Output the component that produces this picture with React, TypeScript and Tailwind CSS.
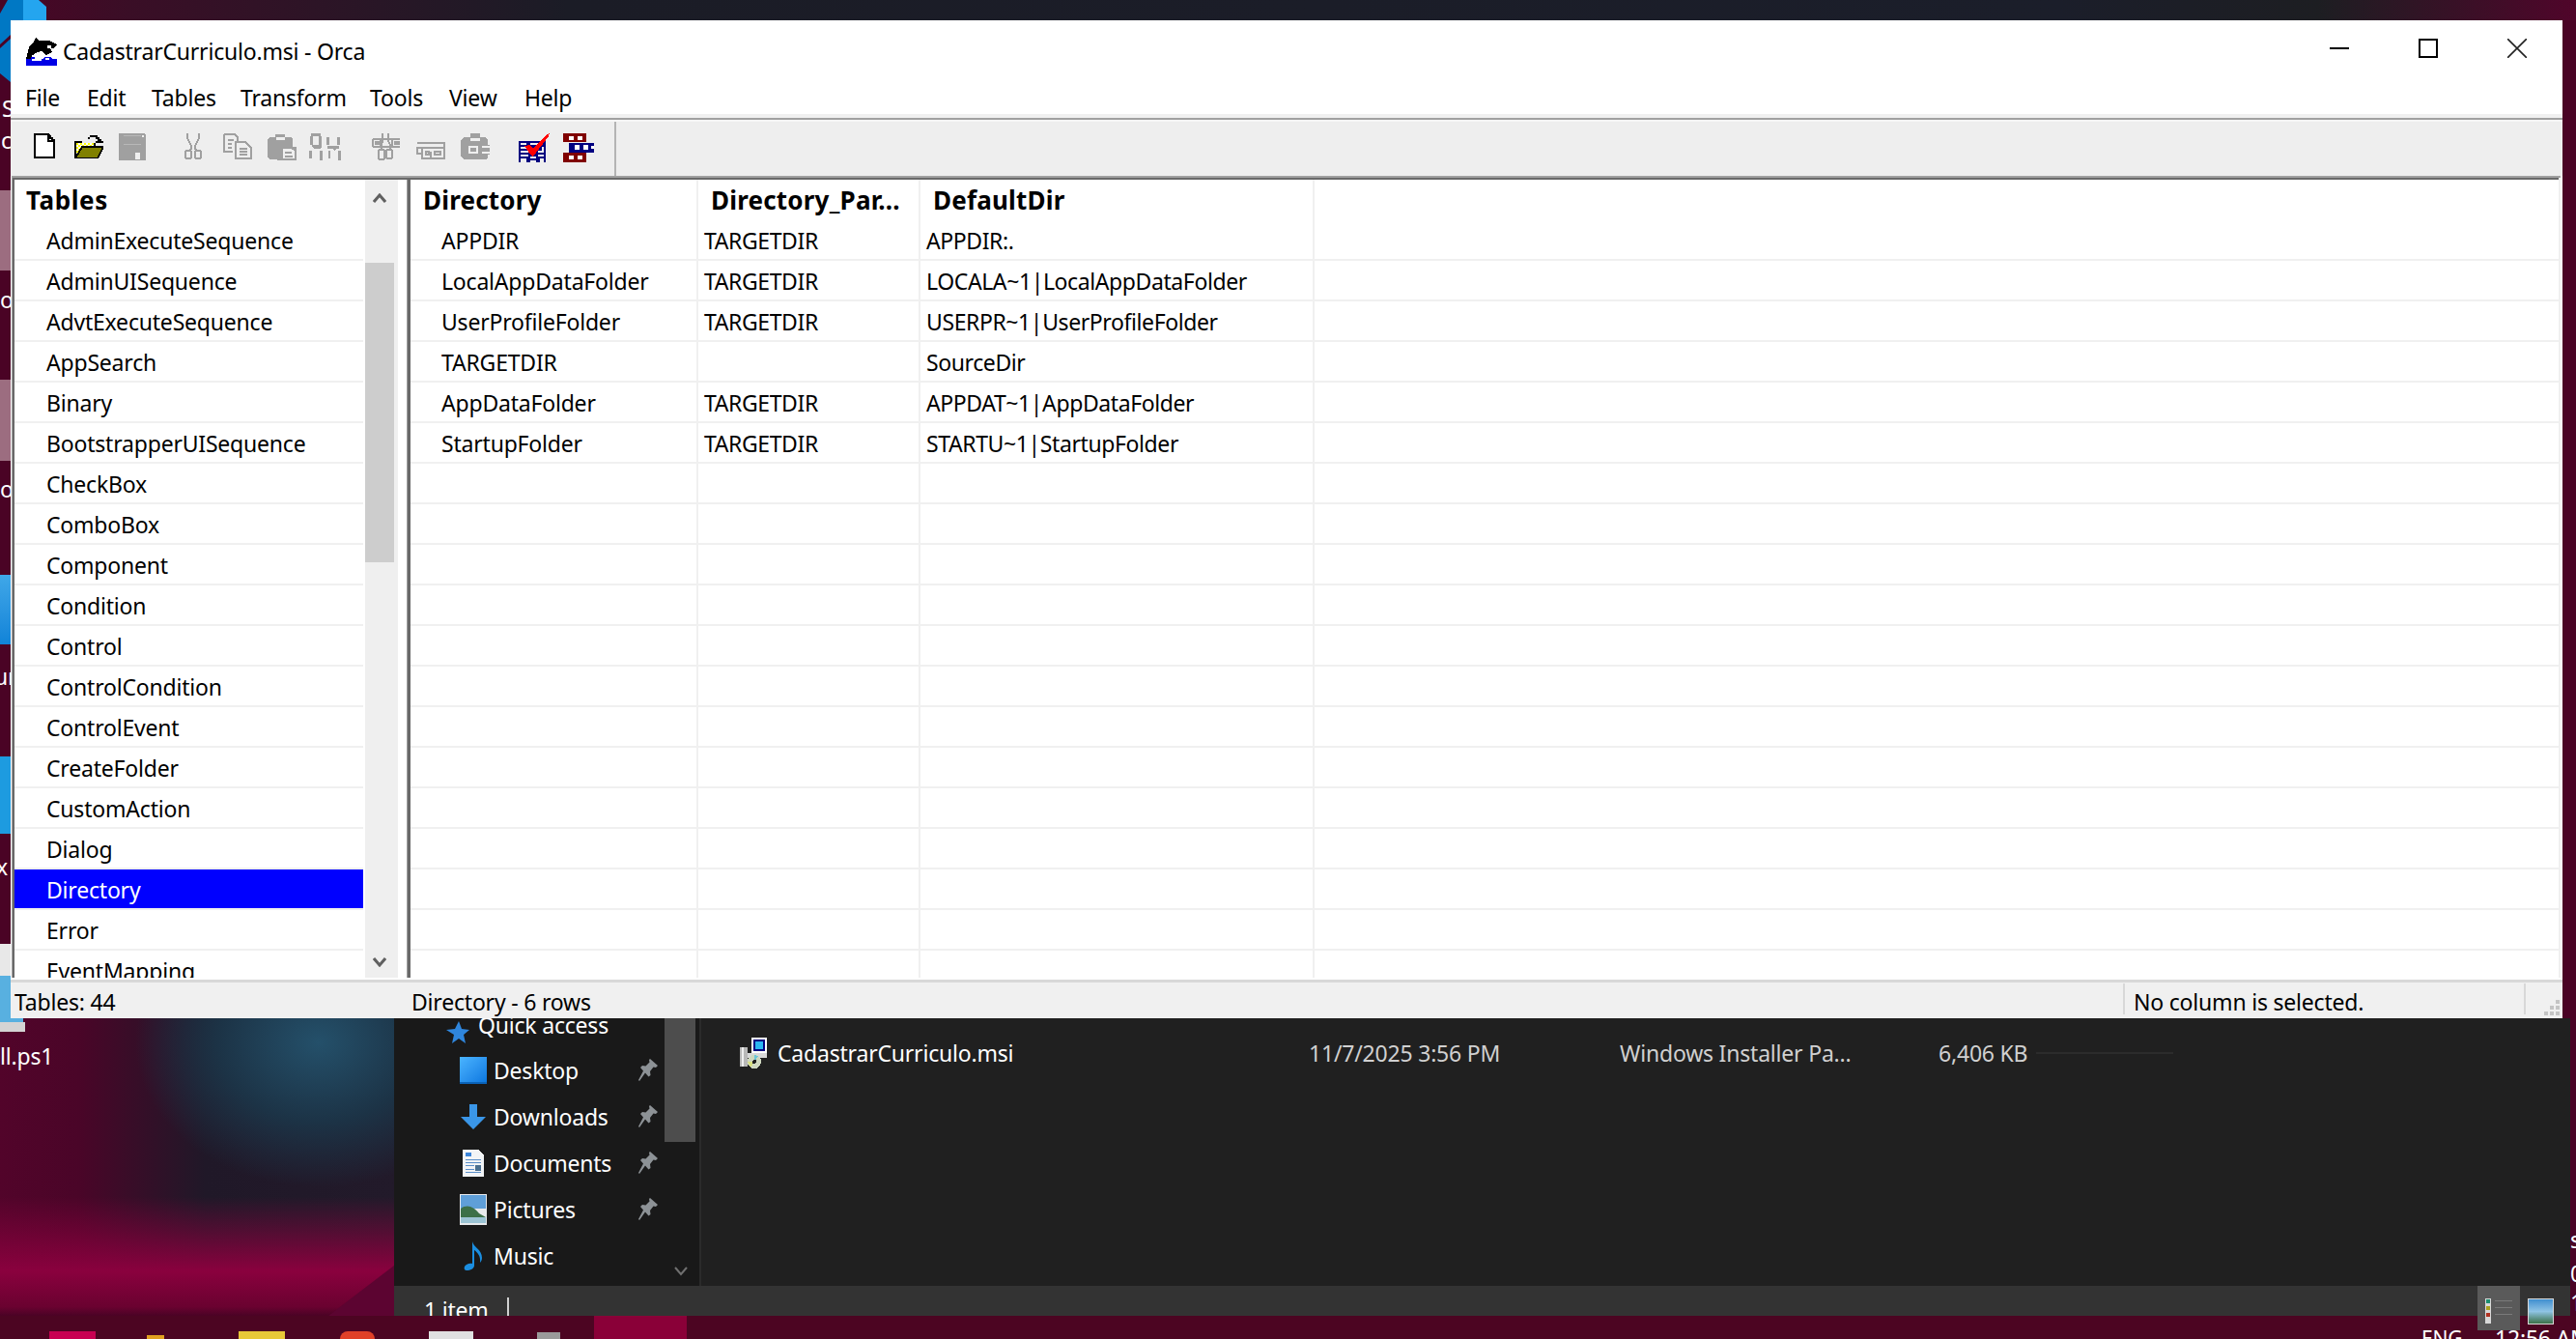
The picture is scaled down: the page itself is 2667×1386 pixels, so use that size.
import React from 'react';

const FONT = "font-['Noto_Sans',sans-serif] text-[23px] tracking-[-0.2px]";

const tables = [
  'AdminExecuteSequence', 'AdminUISequence', 'AdvtExecuteSequence', 'AppSearch', 'Binary',
  'BootstrapperUISequence', 'CheckBox', 'ComboBox', 'Component', 'Condition', 'Control',
  'ControlCondition', 'ControlEvent', 'CreateFolder', 'CustomAction', 'Dialog', 'Directory',
  'Error', 'EventMapping',
];

const dirRows = [
  ['APPDIR', 'TARGETDIR', 'APPDIR:.'],
  ['LocalAppDataFolder', 'TARGETDIR', 'LOCALA~1|LocalAppDataFolder'],
  ['UserProfileFolder', 'TARGETDIR', 'USERPR~1|UserProfileFolder'],
  ['TARGETDIR', '', 'SourceDir'],
  ['AppDataFolder', 'TARGETDIR', 'APPDAT~1|AppDataFolder'],
  ['StartupFolder', 'TARGETDIR', 'STARTU~1|StartupFolder'],
  ...Array.from({ length: 13 }, () => ['', '', '']),
];

const menus = [
  ['File', 'w-[64px]'], ['Edit', 'w-[67px]'], ['Tables', 'w-[92px]'], ['Transform', 'w-[134px]'],
  ['Tools', 'w-[82px]'], ['View', 'w-[78px]'], ['Help', 'w-[60px]'],
];

function OrcaIcon() {
  return (
    <svg width="32" height="29" viewBox="0 0 32 29" shapeRendering="crispEdges">
      <path d="M0 22 L3 10 L8 4 L10 0 L13 3 L24 3 L32 7 L29 11 L25 11 L27 15 L21 18 L16 14 L9 16 L6 22 Z" fill="#000" />
      <path d="M22 8h4v3h-4zM6 18h8v4H6z" fill="#fff" />
      <path d="M0 22h5v-2h4v2h8l3-2h5l3 2h4v7H0z" fill="#0000e6" />
      <path d="M6 22h10v2H6zM20 21h4v2h-4z" fill="#fff" />
    </svg>
  );
}

function NewIcon() {
  return (
    <svg width="22" height="26" viewBox="0 0 22 26" shapeRendering="crispEdges">
      <path d="M1 1h14l2 2v2h2v2h2v18H1z" fill="#fff" stroke="#000" strokeWidth="2" />
      <path d="M14 1h2v6h5v2h-7z" fill="#000" />
    </svg>
  );
}

function OpenIcon() {
  return (
    <svg width="30" height="26" viewBox="0 0 30 26" shapeRendering="crispEdges">
      <defs>
        <pattern id="dither" width="4" height="4" patternUnits="userSpaceOnUse">
          <rect width="4" height="4" fill="#fff" />
          <rect width="2" height="2" fill="#ffff00" />
          <rect x="2" y="2" width="2" height="2" fill="#ffff00" />
        </pattern>
      </defs>
      <path d="M0 8h8v2h14v6H0z" fill="#000" />
      <path d="M2 10h18v10H2z" fill="url(#dither)" />
      <path d="M0 10h2v16H0zM0 24h24v2H0z" fill="#000" />
      <path d="M2 24l6-10h22l-6 12H2z" fill="#808000" stroke="#000" strokeWidth="2" />
      <path d="M14 4h2V2h8v2h2v2h2v2h2v2h-8V8h2V6h-2V4h-6v2h-2z" fill="#000" />
    </svg>
  );
}

function SaveIcon() {
  return (
    <svg width="28" height="28" viewBox="0 0 28 28" shapeRendering="crispEdges">
      <path d="M0 0h26l2 2v26H0z" fill="#a0a0a0" />
      <path d="M5 2h18v1H5zM5 11h18v1H5z" fill="#b8b8b8" />
      <path d="M17 20h5v7h-5z" fill="#efefef" />
      <path d="M24 2h2v2h-2z" fill="#efefef" />
    </svg>
  );
}

function CutIcon() {
  return (
    <svg width="18" height="27" viewBox="0 0 18 27" fill="none" stroke="#a0a0a0" strokeWidth="2" shapeRendering="crispEdges">
      <path d="M3 0v5l2 4 2 4v3l-2 2M15 0v5l-2 4-2 4v3l2 2" />
      <rect x="1" y="18" width="6" height="8" rx="2" />
      <rect x="11" y="18" width="6" height="8" rx="2" />
    </svg>
  );
}

function CopyIcon() {
  return (
    <svg width="30" height="27" viewBox="0 0 30 27" fill="none" stroke="#a0a0a0" strokeWidth="2" shapeRendering="crispEdges">
      <path d="M1 1h11l3 3v6M1 1v18h9" />
      <path d="M5 7h6M5 11h4M5 15h4" />
      <path d="M13 9h10l6 6v11H13z" fill="#efefef" />
      <path d="M17 16h8M17 19h8M17 22h8" />
    </svg>
  );
}

function PasteIcon() {
  return (
    <svg width="30" height="28" viewBox="0 0 30 28" shapeRendering="crispEdges">
      <path d="M2 4h6V1h10v3h6l2 2v8h4v14H10v-1H2l-2-2V6z" fill="#a0a0a0" />
      <path d="M9 4h9v3H9z" fill="#efefef" />
      <path d="M15 15h10l4 3v9H15z" fill="#efefef" stroke="#a0a0a0" strokeWidth="2" />
      <path d="M18 19h7v2h-7zM18 23h8v2h-8z" fill="#a0a0a0" />
    </svg>
  );
}

function PatternIcon() {
  return (
    <svg width="33" height="28" viewBox="0 0 33 28" fill="#a0a0a0" shapeRendering="crispEdges">
      <path d="M2 0h10v3H2zM1 3h3v9H1zM10 3h3v9h-3zM18 4h3v8h-3zM29 4h3v8h-3z" />
      <path d="M3 12h10v2l-2 2H5l-2-2zM19 13h12v3h-3l-2 2-2-2h-5z" />
      <path d="M0 18h3v8H0zM11 18h3v10h-3zM20 18h2v8h-2zM30 18h3v10h-3z" />
    </svg>
  );
}

function TableCutIcon() {
  return (
    <svg width="30" height="28" viewBox="0 0 30 28" fill="none" stroke="#a0a0a0" strokeWidth="2" shapeRendering="crispEdges">
      <path d="M11 0v8l-1 4v4M17 0v8l2 4v4" />
      <path d="M1 6h28M1 14h28M1 6v8M9 6v8M21 6v8" />
      <path d="M4 9h3v2H4zM24 9h4v2h-4z" />
      <rect x="7" y="17" width="6" height="10" rx="2" />
      <rect x="15" y="17" width="6" height="9" rx="2" />
    </svg>
  );
}

function TableCopyIcon() {
  return (
    <svg width="30" height="18" viewBox="0 0 30 18" fill="none" stroke="#a0a0a0" strokeWidth="2" shapeRendering="crispEdges">
      <path d="M1 1h28v5H1v6h5" />
      <path d="M6 6h23v11H6zM15 10v7" />
      <path d="M10 10h3v3h-3zM19 10h6v3h-6z" />
    </svg>
  );
}

function TablePasteIcon() {
  return (
    <svg width="30" height="27" viewBox="0 0 30 27" shapeRendering="crispEdges">
      <path d="M4 4h6V0h10v4h6l2 3v5h2v10h-2v3l-2 2H4l-4-3V7z" fill="#a0a0a0" />
      <path d="M10 5h10v3H10z" fill="#efefef" />
      <path d="M8 13h10v2H8zM8 19h10v2H8zM22 13h8v2h-8zM22 19h8v2h-8zM8 13h2v8H8zM16 13h2v8h-2z" fill="#efefef" />
    </svg>
  );
}

function ValidateIcon() {
  return (
    <svg width="32" height="30" viewBox="0 0 32 30" shapeRendering="crispEdges">
      <path d="M0 8h28v22H0z" fill="#000080" />
      <path d="M2 10h6v2H2zM2 14h6v2H2zM2 18h8v2H2zM2 22h8v2H2zM12 24h6v2h-6zM12 28h6v2h-6zM2 26h6v2H2zM22 26h4v2h-4zM20 22h6v2h-6zM24 14h2v6h-2zM12 10h10v2H12zM20 18h4v2h-4zM2 28h6v2H2zM22 28h4v2h-4z" fill="#efefef" />
      <path d="M6 13l6-1 3 4L28 2l4-2-1 3-16 21-3-2z" fill="#ff0000" />
    </svg>
  );
}

function TreeIcon() {
  return (
    <svg width="32" height="30" viewBox="0 0 32 30" shapeRendering="crispEdges">
      <path d="M0 0h24v9H0zM0 20h24v10H0z" fill="#800000" />
      <path d="M6 10h26v10H6z" fill="#000080" />
      <path d="M6 3h5v4H6zM15 3h5v4h-5zM6 23h5v4H6zM15 23h5v4h-5zM12 12h5v5h-5zM21 12h5v5h-5zM29 13h3v3h-3z" fill="#fff" />
    </svg>
  );
}

function UpChevron() {
  return (
    <svg width="14" height="10" viewBox="0 0 14 10" fill="none" stroke="#606060" strokeWidth="3">
      <path d="M1 9 L7 2 L13 9" />
    </svg>
  );
}

function DownChevron() {
  return (
    <svg width="14" height="10" viewBox="0 0 14 10" fill="none" stroke="#606060" strokeWidth="3">
      <path d="M1 1 L7 8 L13 1" />
    </svg>
  );
}

function Grip() {
  return (
    <svg width="16" height="16" viewBox="0 0 16 16" fill="#c4c4c4" shapeRendering="crispEdges">
      <path d="M12 0h4v4h-4zM6 6h4v4H6zM12 6h4v4h-4zM0 12h4v4H0zM6 12h4v4H6zM12 12h4v4h-4z" />
    </svg>
  );
}

function MsiIcon() {
  return (
    <svg width="30" height="32" viewBox="0 0 30 32" shapeRendering="crispEdges">
      <path d="M12 0h16v16H12z" fill="#fff" />
      <path d="M14 2h12v12H14z" fill="#000080" />
      <path d="M16 4h8v8h-8z" fill="#2ab6f0" />
      <path d="M0 10h8v20H0z" fill="#b8b8b8" />
      <path d="M2 10h2v20H2z" fill="#efefef" />
      <path d="M8 16h20v5H8z" fill="#d8d8d8" />
      <circle cx="15" cy="25" r="7" fill="#cfd8c0" />
      <path d="M15 18 L19 19 L15 25z" fill="#6ec6d8" />
      <path d="M8 25 L15 25 L11 31z" fill="#d8e080" />
      <circle cx="15" cy="25" r="2" fill="#202020" />
    </svg>
  );
}

function PinIcon() {
  return (
    <svg width="20" height="24" viewBox="0 0 20 24" fill="#8d9296">
      <path d="M12 0 L20 7 L18 9 L15.5 8.5 L12 13 L12.5 17 L10.5 18.5 L7 14.5 L1 23 L0 22 L5 12.5 L2 9 L4 7 L7.5 7.5 L11.5 3.5 L11 1z" />
    </svg>
  );
}

function StarIcon() {
  return (
    <svg width="24" height="24" viewBox="0 0 24 24" fill="#2f86dd">
      <path d="M13 0 L16 8 L24 9 L18 14 L20 23 L13 18 L6 23 L8 14 L0 9 L9 8z" />
    </svg>
  );
}

function DesktopIcon() {
  return <div className="h-[28px] w-[28px] border-b-2 border-[#0b63b8] bg-gradient-to-br from-[#4ab4ff] to-[#0a78e0]" />;
}

function DownloadIcon() {
  return (
    <svg width="26" height="26" viewBox="0 0 26 26" fill="#3a96e8">
      <path d="M9 0h8v13h9L13 26 0 13h9z" />
    </svg>
  );
}

function DocumentsIcon() {
  return (
    <svg width="22" height="28" viewBox="0 0 22 28" shapeRendering="crispEdges">
      <path d="M0 0h16l6 6v22H0z" fill="#f2f4f6" />
      <path d="M3 3h6v4H3z" fill="#3b84d8" />
      <path d="M3 10h16v1H3zM3 13h16v1H3zM3 16h9v1H3zM3 20h9v1H3zM3 23h16v1H3z" fill="#5a8ec8" />
      <path d="M13 16h6v6h-6z" fill="#4a7090" />
    </svg>
  );
}

function PicturesIcon() {
  return (
    <svg width="28" height="32" viewBox="0 0 28 32">
      <path d="M0 0h28v32H0z" fill="#e8eaec" />
      <path d="M1 1h26v14H1z" fill="#5f9fd8" />
      <path d="M1 15 C8 10 14 13 20 20 L27 24 V30 H1z" fill="#3c7048" />
      <path d="M1 24h26v6H1z" fill="#9cc4d4" />
    </svg>
  );
}

function MusicIcon() {
  return (
    <svg width="20" height="30" viewBox="0 0 20 30" fill="#1b8ee0">
      <path d="M9 0 C10 6 19 8 19 17 C19 19 18 21 17 22 C18 15 14 11 11 9 V25 C11 28 7 30 3 30 C1 30 0 28 1 26 C2 24 6 22 9 23z" />
    </svg>
  );
}

function WinButton({ children }: { children: React.ReactNode }) {
  return <div className="flex w-[92px] items-center justify-center">{children}</div>;
}

const navItems: [string, React.ReactNode, boolean][] = [
  ['Desktop', <DesktopIcon />, true],
  ['Downloads', <DownloadIcon />, true],
  ['Documents', <DocumentsIcon />, true],
  ['Pictures', <PicturesIcon />, true],
  ['Music', <MusicIcon />, false],
];

function OrcaWindow() {
  return (
    <div className={`absolute left-[11px] top-[21px] flex h-[1033px] w-[2642px] flex-col bg-white text-black ${FONT}`}>
      <div className="flex h-[64px] shrink-0 items-center pl-[16px]">
        <OrcaIcon />
        <span className="ml-[6px] flex-1">CadastrarCurriculo.msi - Orca</span>
        <div className="mb-[6px] mr-[1px] flex">
          <WinButton><div className="h-[2px] w-[20px] bg-black" /></WinButton>
          <WinButton><div className="h-[20px] w-[20px] border-2 border-black" /></WinButton>
          <WinButton>
            <svg width="20" height="20" viewBox="0 0 20 20" stroke="#222" strokeWidth="1.6">
              <path d="M0 0 L20 20 M20 0 L0 20" />
            </svg>
          </WinButton>
        </div>
      </div>
      <div className="flex h-[33px] shrink-0 items-center pl-[15px]">
        {menus.map(([label, w]) => (
          <span key={label} className={w}>{label}</span>
        ))}
      </div>
      <div className="h-[4px] shrink-0 bg-[#f0f0f0]" />
      <div className="h-[2px] shrink-0 bg-[#a0a0a0]" />
      <div className="h-[2px] shrink-0 bg-[#f6f6f6]" />
      <div className="flex h-[56px] shrink-0 bg-[#eeeeee]">
        <div className="flex h-full w-[625px] items-start pl-[24px] pt-[12px]">
          <div className="w-[42px]"><NewIcon /></div>
          <div className="w-[46px]"><OpenIcon /></div>
          <div className="w-[68px]"><SaveIcon /></div>
          <div className="w-[40px]"><CutIcon /></div>
          <div className="w-[46px]"><CopyIcon /></div>
          <div className="w-[43px]"><PasteIcon /></div>
          <div className="w-[65px]"><PatternIcon /></div>
          <div className="w-[46px]"><TableCutIcon /></div>
          <div className="w-[46px] pt-[9px]"><TableCopyIcon /></div>
          <div className="w-[60px]"><TablePasteIcon /></div>
          <div className="w-[46px]"><ValidateIcon /></div>
          <div className="w-[32px]"><TreeIcon /></div>
        </div>
        <div className="w-[2px] bg-[#b4b4b4]" />
      </div>
      <div className="ml-[1px] mr-[2px] h-[2px] shrink-0 bg-[#a0a0a0]" />
      <div className="ml-[1px] mr-[2px] flex min-h-0 flex-1 overflow-hidden border-r-2 border-[#f0f0f0]">
        <div className="w-[1px] bg-[#a0a0a0]" />
        <div className="w-[2px] bg-[#696969]" />
        <div className="flex min-h-0 flex-1 overflow-hidden border-t-2 border-[#696969]">
          <TablesPane />
          <div className="w-[1px] bg-[#a0a0a0]" />
          <div className="w-[3px] bg-[#696969]" />
          <DataPane />
        </div>
      </div>
      <div className="h-[2px] shrink-0 bg-white" />
      <div className="h-[3px] shrink-0 bg-[#d8d8d8]" />
      <div className="relative flex h-[37px] shrink-0 items-center bg-[#f0f0f0]">
        <span className="w-[415px] pl-[4px] pt-[3px]">Tables: 44</span>
        <span className="w-[1772px] pt-[3px]">Directory - 6 rows</span>
        <div className="mt-[-3px] h-[32px] w-[2px] bg-[#d8d8d8]" />
        <span className="w-[413px] pl-[9px] pt-[3px]">No column is selected.</span>
        <div className="mt-[-3px] h-[32px] w-[2px] bg-[#d8d8d8]" />
        <div className="absolute bottom-[3px] right-[3px]"><Grip /></div>
      </div>
    </div>
  );
}

function TablesPane() {
  return (
    <div className="flex w-[406px] shrink-0">
      <div className="w-[361px] shrink-0">
        <div className="flex h-[42px] items-center pl-[12px] text-[26px] font-bold tracking-[0.6px]">Tables</div>
        {tables.map((name) => (
          <div key={name} className="h-[42px] border-b-2 border-[#f0f0f0]">
            <div className={`flex h-[40px] items-center pl-[33px] pt-[2px] ${name === 'Directory' ? 'bg-[#0000ff] text-white' : ''}`}>{name}</div>
          </div>
        ))}
      </div>
      <div className="ml-[2px] flex w-[34px] shrink-0 flex-col bg-[#efefef]">
        <div className="flex h-[38px] shrink-0 items-center justify-center pr-[4px]"><UpChevron /></div>
        <div className="h-[48px] shrink-0" />
        <div className="h-[310px] w-[30px] shrink-0 bg-[#cdcdcd]" />
        <div className="flex-1" />
        <div className="flex h-[32px] shrink-0 items-center justify-center pr-[4px]"><DownChevron /></div>
      </div>
      <div className="w-[8px] shrink-0" />
    </div>
  );
}

function DataPane() {
  const cols = ['w-[298px]', 'w-[230px]', 'w-[408px]'];
  const heads = ['Directory', 'Directory_Par...', 'DefaultDir'];
  return (
    <div className="min-w-0 flex-1">
      <div className="flex h-[42px]">
        {heads.map((h, i) => (
          <div key={h} className={`${cols[i]} flex items-center border-r-2 border-[#f0f0f0] pl-[13px] text-[26px] font-bold tracking-[0.2px]`}>{h}</div>
        ))}
      </div>
      {dirRows.map((row, r) => (
        <div key={r} className="flex h-[42px] border-b-2 border-[#f0f0f0]">
          {row.map((c, i) => (
            <div key={i} className={`${cols[i]} flex items-center border-r-2 border-[#f0f0f0] pt-[2px] ${i === 0 ? 'pl-[32px]' : 'pl-[6px] tracking-[-0.4px]'}`}>{c}</div>
          ))}
        </div>
      ))}
    </div>
  );
}

function ExplorerWindow() {
  return (
    <div className={`absolute left-[408px] top-[1054px] flex h-[308px] w-[2253px] flex-col bg-[#202020] text-white ${FONT}`}>
      <div className="flex min-h-0 flex-1">
        <div className="relative w-[316px] shrink-0 overflow-hidden bg-[#191919]">
          <div className="flex h-[30px] items-center pl-[54px]">
            <StarIcon />
            <span className="ml-[9px] mt-[-16px]">Quick access</span>
          </div>
          {navItems.map(([label, icon, pinned]) => (
            <div key={label} className="flex h-[48px] items-center">
              <div className="flex w-[103px] justify-end pr-[3px]"><div className="flex w-[36px] justify-center">{icon}</div></div>
              <span className="w-[150px]">{label}</span>
              {pinned && <PinIcon />}
            </div>
          ))}
          <div className="absolute right-[4px] top-0 h-[128px] w-[32px] bg-[#4d4d4d]" />
          <svg className="absolute bottom-[10px] right-[12px]" width="14" height="10" viewBox="0 0 14 10" fill="none" stroke="#707070" strokeWidth="2">
            <path d="M1 1 L7 8 L13 1" />
          </svg>
        </div>
        <div className="min-w-0 flex-1 border-l-2 border-[#2b2b2b]">
          <div className="flex h-[72px] items-center">
            <div className="ml-[40px] w-[39px]"><MsiIcon /></div>
            <span className="w-[550px]">CadastrarCurriculo.msi</span>
            <span className="w-[322px] text-[#d0d0d0]">11/7/2025 3:56 PM</span>
            <span className="w-[330px] text-[#d0d0d0]">Windows Installer Pa...</span>
            <span className="w-[101px] text-[#d0d0d0]">6,406 KB</span>
            <div className="h-[2px] w-[142px] bg-[#2c2c2c]" />
          </div>
        </div>
      </div>
      <div className="relative flex h-[31px] shrink-0 overflow-hidden bg-[#333333]">
        <span className="ml-[31px] mt-[9px] w-[86px] leading-[32px]">1 item</span>
        <div className="mt-[12px] h-[20px] w-[2px] bg-[#d0d0d0]" />
      </div>
    </div>
  );
}

function ViewButtons() {
  return (
    <>
      <div className="absolute left-[2565px] top-[1331px] flex h-[46px] w-[44px] justify-center bg-[#5a5a5a] pt-[13px]">
        <svg width="28" height="26" viewBox="0 0 28 26" shapeRendering="crispEdges">
          <path d="M0 0h6v26H0z" fill="#d8d8d8" />
          <path d="M1 1h4v4H1z" fill="#1b8e70" />
          <path d="M1 8h4v4H1z" fill="#a8a020" />
          <path d="M1 15h4v4H1z" fill="#b03020" />
          <path d="M10 2h18v1H10zM10 9h18v1H10zM10 16h18v1H10z" fill="#7a7a7a" />
        </svg>
      </div>
      <div className="absolute left-[2617px] top-[1344px] h-[27px] w-[27px] border border-[#d8d8d8] bg-gradient-to-b from-[#3f8fd0] via-[#8fc4e4] to-[#3c7048]" />
    </>
  );
}

function DesktopBits() {
  const bit = `absolute whitespace-nowrap text-white ${FONT}`;
  return (
    <>
      {/* bits of desktop icons showing at the left of the window */}
      <svg className="absolute left-0 top-0" width="48" height="90" viewBox="0 0 48 90">
        <path d="M24 0h16l8 7v20H24z" fill="#24a5ef" />
        <path d="M8 0h16v26H11v10L0 46 V14z" fill="#0078c4" />
        <path d="M0 50 L11 40 V85 L0 76z" fill="#0078c4" />
      </svg>
      <div className="absolute left-0 top-[197px] h-[83px] w-[11px] bg-[#9c6d80]" />
      <div className="absolute left-0 top-[393px] h-[84px] w-[12px] bg-[#9c6d80]" />
      <div className="absolute left-0 top-[595px] h-[72px] w-[11px] bg-gradient-to-b from-[#3fa7e8] to-[#0f83d8]" />
      <div className="absolute left-0 top-[783px] h-[80px] w-[11px] bg-[#1d9be0]" />
      <div className="absolute left-0 top-[977px] h-[33px] w-[11px] bg-[#e8e8e8]" />
      <div className="absolute left-0 top-[1010px] h-[48px] w-[24px] bg-[#58b0e0]" />
      <div className="absolute left-0 top-[1058px] h-[10px] w-[26px] bg-[#d4d4d4]" />
      <span className={`${bit} left-[2px] top-[95px]`}>S</span>
      <span className={`${bit} left-[1px] top-[128px]`}>c</span>
      <span className={`${bit} left-[0px] top-[293px]`}>o</span>
      <span className={`${bit} left-[0px] top-[489px]`}>o</span>
      <span className={`${bit} left-[-6px] top-[683px]`}>ur</span>
      <span className={`${bit} left-[-4px] top-[880px]`}>x|</span>
      <span className={`${bit} left-[0px] top-[1076px]`}>ll.ps1</span>
      <span className={`${bit} left-[2661px] top-[1266px]`}>s</span>
      <span className={`${bit} left-[2661px] top-[1301px]`}>0</span>
      <span className={`${bit} left-[2661px] top-[1331px]`}>1</span>
    </>
  );
}

function Taskbar() {
  return (
    <div className={`absolute left-0 top-[1362px] h-[24px] w-[2667px] overflow-hidden bg-[#4c0522] text-white ${FONT}`}>
      <div className="flex h-full items-start">
        <div className="ml-[51px] mt-[16px] h-[8px] w-[48px] bg-[#c80052]" />
        <div className="ml-[53px] mt-[20px] h-[4px] w-[18px] bg-[#e0a020]" />
        <div className="ml-[77px] mt-[16px] h-[8px] w-[48px] bg-[#e8c838]" />
        <div className="ml-[57px] mt-[16px] h-[8px] w-[36px] rounded-t-full bg-[#e04028]" />
        <div className="ml-[56px] mt-[16px] h-[8px] w-[46px] bg-[#e0e0e0]" />
        <div className="ml-[66px] mt-[17px] h-[7px] w-[24px] bg-[#9a9a9a]" />
        <div className="ml-[35px] h-full w-[96px] bg-[#8a0038]" />
      </div>
      <span className="absolute left-[2507px] top-[8px] whitespace-nowrap text-[21px] leading-[30px]">ENG</span>
      <span className="absolute left-[2583px] top-[8px] whitespace-nowrap leading-[30px]">12:56 AM</span>
    </div>
  );
}

export default function App() {
  return (
    <div className="relative h-[1386px] w-[2667px] overflow-hidden bg-[#4a0325]">
      {/* wallpaper */}
      <div className="absolute inset-x-0 top-0 h-[21px] bg-[linear-gradient(90deg,#4a0525_0%,#3a0e26_5%,#1b1c26_22%,#1b1e2a_80%,#1d1e22_90%,#50052a_100%)]" />
      <div className="absolute left-0 top-[1054px] h-[308px] w-[408px] bg-[linear-gradient(180deg,transparent_60%,#8a013e_85%,#6a0230_97%,#4a0325_100%),radial-gradient(ellipse_190px_150px_at_330px_25px,#24506a_0%,#1c3346_55%,transparent_100%),linear-gradient(90deg,#52042a_0%,#4a0528_20%,#201828_52%,#221a2a_100%)]" />
      <div className="absolute left-[340px] top-[1310px] h-[52px] w-[68px] bg-[#5c0431] [clip-path:polygon(100%_0,100%_100%,0_100%)]" />
      <DesktopBits />
      <ExplorerWindow />
      <OrcaWindow />
      <Taskbar />
      <ViewButtons />
    </div>
  );
}
